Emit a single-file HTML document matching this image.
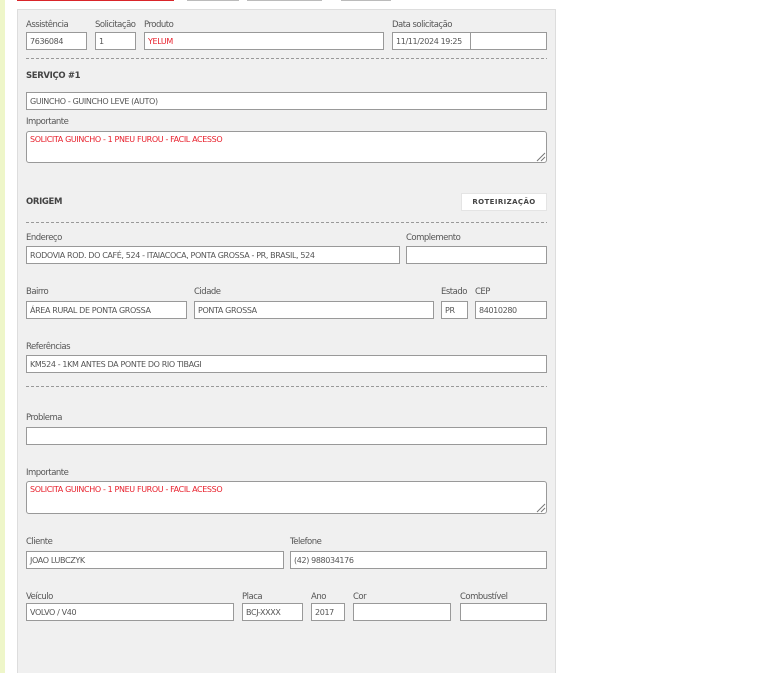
<!DOCTYPE html>
<html lang="pt-BR">
<head>
<meta charset="utf-8">
<title>Serviço</title>
<style>
html,body{margin:0;padding:0;background:#fff;width:783px;height:673px;overflow:hidden;}
body{position:relative;font-family:"DejaVu Sans","Liberation Sans",sans-serif;color:#444;}
.abs,.l,.f,.t,.h,.d{position:absolute;box-sizing:border-box;}
.l{font-size:8.5px;line-height:12px;height:12px;white-space:nowrap;color:#555;letter-spacing:-.5px;}
.f,.t{background:#fff;border:1px solid #999;font-size:8px;line-height:16px;padding:1px 0 0 3px;white-space:nowrap;overflow:hidden;color:#555;letter-spacing:-.37px;}
.t{border-radius:3px;line-height:14px;}
.h{font-weight:bold;font-size:8.5px;line-height:12px;color:#444;letter-spacing:-.35px;white-space:nowrap;}
.d{height:1px;left:26px;width:521px;background:repeating-linear-gradient(90deg,#999 0,#999 3px,transparent 3px,transparent 5px);}
</style>
</head>
<body>
<div class="abs" style="left:0;top:0;width:5px;height:673px;background:#eef6c9"></div>
<div class="abs" style="left:17px;top:0;width:157px;height:1px;background:#d9252a"></div>
<div class="abs" style="left:187px;top:0;width:52px;height:1px;background:#bbb"></div>
<div class="abs" style="left:247px;top:0;width:75px;height:1px;background:#bbb"></div>
<div class="abs" style="left:341px;top:0;width:50px;height:1px;background:#bbb"></div>
<div class="abs" style="left:17px;top:9px;width:539px;height:664px;background:#f0f0f0;border:1px solid #ddd;border-bottom:0"></div>

<div class="l" style="left:26px;top:19px">Assistência</div>
<div class="l" style="left:95px;top:19px">Solicitação</div>
<div class="l" style="left:144px;top:19px">Produto</div>
<div class="l" style="left:392px;top:19px">Data solicitação</div>
<div class="f" style="left:26px;top:32px;width:61px;height:18px">7636084</div>
<div class="f" style="left:95px;top:32px;width:41px;height:18px">1</div>
<div class="f" style="left:144px;top:32px;width:240px;height:18px;color:#e8202c">YELUM</div>
<div class="f" style="left:392px;top:32px;width:79px;height:18px">11/11/2024 19:25</div>
<div class="f" style="left:470px;top:32px;width:77px;height:18px"></div>
<div class="d" style="top:58px"></div>

<div class="h" style="left:26px;top:70px">SERVIÇO #1</div>
<div class="f" style="left:26px;top:92px;width:521px;height:18px">GUINCHO - GUINCHO LEVE (AUTO)</div>
<div class="l" style="left:26px;top:116px">Importante</div>
<div class="t" style="left:26px;top:131px;width:521px;height:32px;color:#e8202c">SOLICITA GUINCHO - 1 PNEU FUROU - FACIL ACESSO</div>
<svg class="abs" style="left:535px;top:151px" width="11" height="11" viewBox="0 0 11 11"><path d="M2 10L10 2M6 10L10 6" stroke="#777" stroke-width="1" fill="none"/></svg>

<div class="h" style="left:26px;top:196px">ORIGEM</div>
<div class="abs" style="left:461px;top:193px;width:86px;height:18px;background:#fff;border:1px solid #e4e4e4;font-size:7px;font-weight:bold;line-height:17px;text-align:center;letter-spacing:.4px;color:#444;white-space:nowrap">ROTEIRIZAÇÃO</div>
<div class="d" style="top:222px"></div>

<div class="l" style="left:26px;top:232px">Endereço</div>
<div class="l" style="left:406px;top:232px">Complemento</div>
<div class="f" style="left:26px;top:246px;width:374px;height:18px">RODOVIA ROD. DO CAFÉ, 524 - ITAIACOCA, PONTA GROSSA - PR, BRASIL, 524</div>
<div class="f" style="left:406px;top:246px;width:141px;height:18px"></div>

<div class="l" style="left:26px;top:286px">Bairro</div>
<div class="l" style="left:194px;top:286px">Cidade</div>
<div class="l" style="left:441px;top:286px">Estado</div>
<div class="l" style="left:475px;top:286px">CEP</div>
<div class="f" style="left:26px;top:301px;width:161px;height:18px">ÁREA RURAL DE PONTA GROSSA</div>
<div class="f" style="left:194px;top:301px;width:240px;height:18px">PONTA GROSSA</div>
<div class="f" style="left:441px;top:301px;width:27px;height:18px">PR</div>
<div class="f" style="left:475px;top:301px;width:72px;height:18px">84010280</div>

<div class="l" style="left:26px;top:341px">Referências</div>
<div class="f" style="left:26px;top:355px;width:521px;height:18px">KM524 - 1KM ANTES DA PONTE DO RIO TIBAGI</div>
<div class="d" style="top:386px"></div>

<div class="l" style="left:26px;top:412px">Problema</div>
<div class="f" style="left:26px;top:427px;width:521px;height:18px"></div>

<div class="l" style="left:26px;top:467px">Importante</div>
<div class="t" style="left:26px;top:481px;width:521px;height:33px;color:#e8202c">SOLICITA GUINCHO - 1 PNEU FUROU - FACIL ACESSO</div>
<svg class="abs" style="left:535px;top:502px" width="11" height="11" viewBox="0 0 11 11"><path d="M2 10L10 2M6 10L10 6" stroke="#777" stroke-width="1" fill="none"/></svg>

<div class="l" style="left:26px;top:536px">Cliente</div>
<div class="l" style="left:290px;top:536px">Telefone</div>
<div class="f" style="left:26px;top:551px;width:258px;height:18px">JOAO LUBCZYK</div>
<div class="f" style="left:290px;top:551px;width:257px;height:18px">(42) 988034176</div>

<div class="l" style="left:26px;top:591px">Veículo</div>
<div class="l" style="left:242px;top:591px">Placa</div>
<div class="l" style="left:311px;top:591px">Ano</div>
<div class="l" style="left:353px;top:591px">Cor</div>
<div class="l" style="left:460px;top:591px">Combustível</div>
<div class="f" style="left:26px;top:603px;width:208px;height:18px">VOLVO / V40</div>
<div class="f" style="left:242px;top:603px;width:61px;height:18px">BCJ-XXXX</div>
<div class="f" style="left:311px;top:603px;width:34px;height:18px">2017</div>
<div class="f" style="left:353px;top:603px;width:98px;height:18px"></div>
<div class="f" style="left:460px;top:603px;width:87px;height:18px"></div>
</body>
</html>
